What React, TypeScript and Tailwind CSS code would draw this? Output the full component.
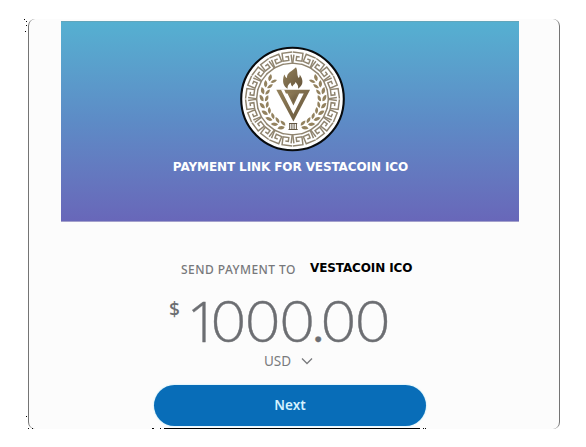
import React from "react";

const KEYS = Array.from({ length: 24 }, (_, i) => i);
const LEAVES = Array.from({ length: 9 }, (_, i) => i);

function Laurel() {
  return (
    <g fill="#93825f">
      {LEAVES.map((i) => (
        <g key={i} transform={`rotate(${-159 + i * 14}) translate(0 -28.3)`}>
          <path d="M-2.8 -.6Q-2.4 -5.2 3.6 -4.6Q2.6 0 -2.8 -.6Z" />
          <path d="M-2.8 .8Q-1.8 5 3.4 4Q2.2 .2 -2.8 .8Z" />
        </g>
      ))}
    </g>
  );
}

function Seal() {
  return (
    <svg className="ml-[5px] block h-[106px] w-[106px]" viewBox="-52.5 -53 106 106">
      <defs>
        <linearGradient id="gold" x1="0" y1="0" x2="1" y2="1">
          <stop offset="0" stopColor="#93815b" />
          <stop offset="1" stopColor="#65543a" />
        </linearGradient>
      </defs>
      <circle r="51.3" fill="#fff" stroke="#080b0e" strokeWidth="2.1" />
      <g fill="none" stroke="#8f846f" strokeWidth="1.45">
        {KEYS.map((i) => (
          <path
            key={i}
            transform={`rotate(${i * 15 + 7.5}) scale(${i % 2 ? -1 : 1} 1)`}
            d="M-5.8 -46.6H4.4V-38.8H-1.4V-42.6H1.6M-4.4 -44.2V-35.6H5"
          />
        ))}
      </g>
      <Laurel />
      <g transform="translate(1 0) scale(-1 1)">
        <Laurel />
      </g>
      <path
        fill="url(#gold)"
        d="M-5 -10.3C-8.5 -12.5 -11 -16.5 -8.3 -24.5C-7.3 -23 -7 -21.5 -5.5 -21C-6 -26.5 0 -28 3.5 -31.8C5.6 -27.5 4 -24.5 6.2 -21C7.2 -21.7 7.2 -23 7.2 -24.5C10.8 -19.5 11.5 -14 5.5 -10.3C6.3 -13.5 4.5 -15 3 -17C2.5 -14.5 1 -15 0 -12.5C-1.5 -13.5 -1.5 -15 -2 -16.5C-4.2 -14.5 -5 -13 -5 -10.3Z"
      />
      <path fill="url(#gold)" d="M-16.2 -9.3H17.6L.9 22.6Z" />
      <path fill="#fff" d="M-11.6 -9.4H-8.4L-6.6 -5.4H-5L.9 6.6L6.6 -5.4H11.2L.9 15Z" />
      <path fill="url(#gold)" d="M-4.6 -5.6H5.2L.9 3.2Z" />
      <path
        fill="none"
        stroke="#625744"
        strokeWidth="1"
        d="M-3.5 24.5H4.7M-2.8 25V30M-.6 25V30M1.6 25V30M3.9 25V30M-4 30.5H5.2"
      />
    </svg>
  );
}

export default function App() {
  return (
    <main className="relative h-[447px] w-[586px] overflow-hidden bg-white pt-[19px] pl-[28px] font-['Noto_Sans',sans-serif]">
      <section className="flex h-[410px] w-[532px] flex-col items-center rounded-[7px] border-x border-[#747474] bg-[#fcfcfc] pt-[2px]">
        <header className="mr-[8px] flex h-[201px] w-[458px] shrink-0 flex-col items-center border-y border-t-[#62a6bb] border-b-[#a3a0cc] bg-linear-to-b from-[#55b0d1] via-[#5d8bc6] to-[#6867b9] pt-[24px]">
          <Seal />
          <h1 className="mt-[7px] ml-[1px] font-['DejaVu_Sans',sans-serif] text-[12px] leading-[16px] font-bold tracking-[-0.1px] whitespace-nowrap text-white">
            PAYMENT LINK FOR VESTACOIN ICO
          </h1>
        </header>
        <div className="mt-[35px] flex h-[22px] w-full shrink-0 items-center pl-[152px] whitespace-nowrap">
          <span className="w-[129px] pt-[3px] text-[12px] font-medium tracking-[0.45px] text-[#77787b]">SEND PAYMENT TO</span>
          <strong className="font-['DejaVu_Sans',sans-serif] text-[12px] tracking-[-0.12px] text-black">VESTACOIN ICO</strong>
        </div>
        <div className="mt-[16px] flex h-[50px] w-full shrink-0 items-start pl-[140px] text-[#6c6e72]">
          <span className="mt-[2px] w-[18px] text-[19px] leading-[25px] font-medium">$</span>
          <span className="flex items-baseline text-[56.5px] leading-[50px] font-light [-webkit-text-stroke:0.4px_#6c6e72]">
            <span className="w-[25px] font-['Open_Sans',sans-serif] text-[55px]">1</span>
            <span className="w-[103px] font-['Lato',sans-serif] tracking-[1.6px]">000</span>
            <span className="w-[7px] font-['Lato',sans-serif] text-[44px] font-normal -indent-[2px]">.</span>
            <span className="font-['Lato',sans-serif] tracking-[1.6px]">00</span>
          </span>
        </div>
        <div className="mt-[6px] flex h-[20px] w-full shrink-0 items-center gap-[9px] pl-[235px] text-[13.5px] text-[#797a7d]">
          <span className="w-[28px] leading-[14px]">USD</span>
          <svg className="h-[8px] w-[12px]" viewBox="0 0 12 8" fill="none" stroke="currentColor" strokeWidth="1.3">
            <path d="M1 1.5L6 6.5L11 1.5" />
          </svg>
        </div>
        <button className="mt-[14px] ml-[-8px] h-[41px] w-[272px] shrink-0 rounded-full bg-[#086db8] text-[13.5px] font-semibold text-[#d5f2ff] shadow-[0_0_2px_#a9e3f5]">
          Next
        </button>
      </section>
      <svg className="absolute inset-0 h-[447px] w-[586px]" viewBox="0 0 586 447" shapeRendering="crispEdges" fill="#000">
        <path d="M164 428h256v1h-256zM152 428h2v1h-2zM160 428h1v1h-1zM423 428h1v1h-1zM425 428h1v1h-1zM24 19h1v1h-1zM26 21h1v1h-1zM26 25h1v1h-1zM25 31h1v1h-1zM26 416h1v1h-1zM28 428h1v1h-1zM32 428h1v1h-1z" />
      </svg>
    </main>
  );
}
